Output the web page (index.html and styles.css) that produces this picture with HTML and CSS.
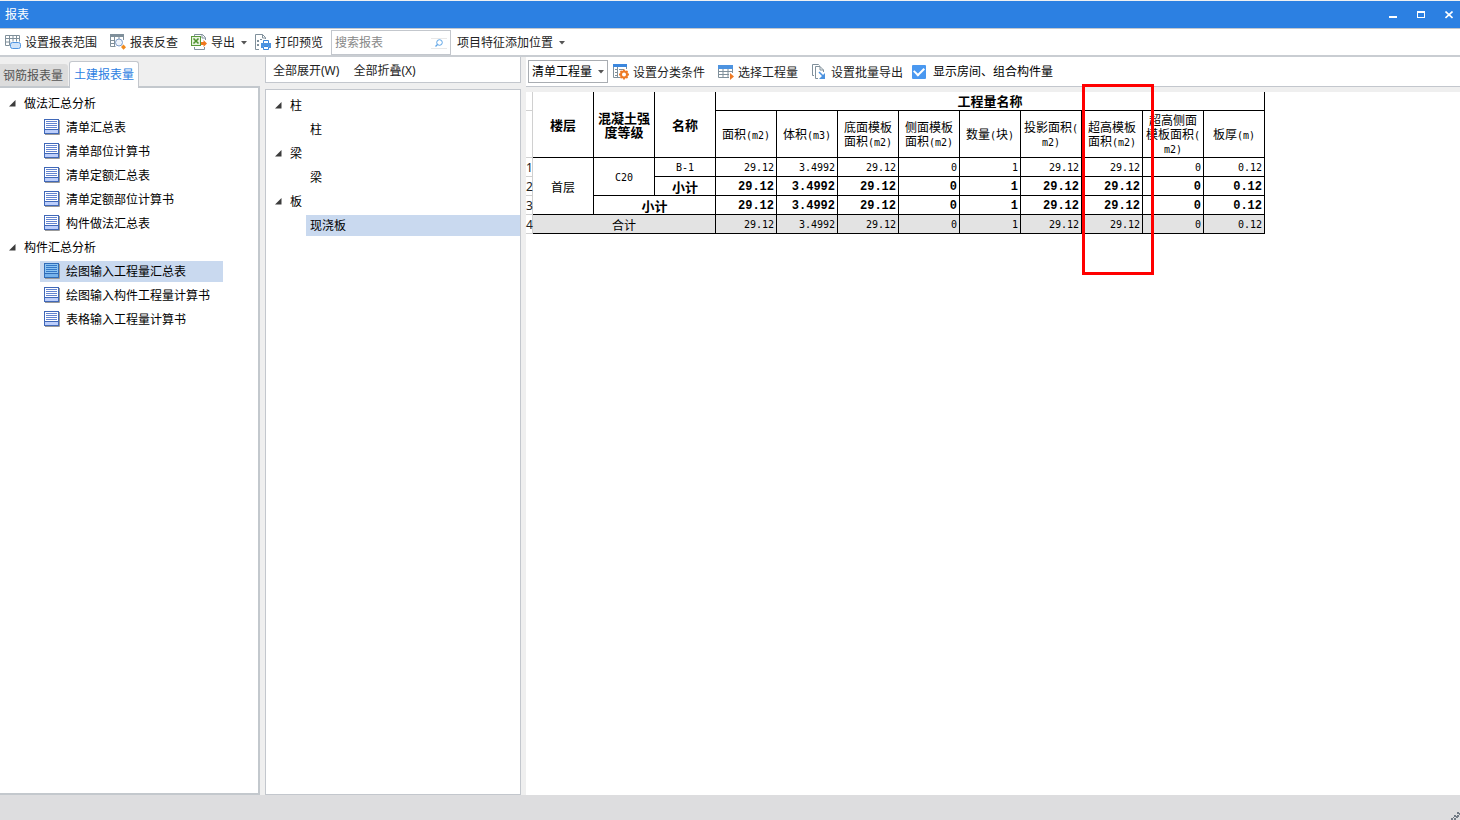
FILE: index.html
```html
<!DOCTYPE html>
<html lang="zh-CN">
<head>
<meta charset="utf-8">
<title>报表</title>
<link rel="stylesheet" href="styles.css">
</head>
<body>
<svg class="defs" aria-hidden="true">
  <symbol id="doc" viewBox="0 0 16 16">
    <path d="M1 15.500h14.500V1" fill="none" stroke="#9a9a9a"/>
    <rect class="doc-page" x=".5" y=".5" width="14" height="14"/>
    <path class="doc-foot" d="M1 11h13v3H1z"/>
    <path class="doc-line" d="M2 2.500h11M2 4.500h11M2 6.500h11M2 8.500h11" fill="none"/>
    <path class="doc-rule" d="M1 10.500h13" fill="none"/>
  </symbol>
  <symbol id="caret" viewBox="0 0 6 4"><path d="M0 0h6L3 3.500z" fill="#555"/></symbol>
  <symbol id="open" viewBox="0 0 7 7"><path d="M6.500 0v6.500H0z" fill="#3c3c3c"/></symbol>
</svg>

<header class="titlebar">
  <h1 class="title">报表</h1>
  <div class="window-controls">
    <button class="win-btn" aria-label="最小化"><svg width="8" height="8" viewBox="0 0 8 8"><path d="M0 5h8v2H0z" fill="#fff"/></svg></button>
    <button class="win-btn" aria-label="最大化"><svg width="8" height="8" viewBox="0 0 8 8"><path d="M0 0h8v7H0zM1 2v4h6V2z" fill="#fff" fill-rule="evenodd"/></svg></button>
    <button class="win-btn" aria-label="关闭"><svg width="8" height="8" viewBox="0 0 8 8"><path d="M.5.500l7 6.500M7.500.500l-7 6.500" stroke="#fff" stroke-width="1.600"/></svg></button>
  </div>
</header>

<div class="toolbar main-toolbar">
  <button class="tool">
    <svg class="icon" width="16" height="16" viewBox="0 0 16 16" fill="none"><path d="M.5 1.500h14v6M.5 1.500v10h4M.5 4.500h14M.5 8h5M4.500 1.500v10M8 1.500v6M11.500 1.500v6" stroke="#80909b"/><rect x="5.500" y="8.500" width="10" height="6" rx="2" fill="#cfe3fa" stroke="#4d93e0"/></svg>
    设置报表范围</button>
  <button class="tool">
    <svg class="icon" width="16" height="16" viewBox="0 0 16 16" fill="none"><path d="M0 0h14v3H0z" fill="#80909b"/><path d="M.5 3v9.500h5M13.500 3v3M0 6.500h5M0 9.500h5M4.500 3v9M9 3v2" stroke="#80909b"/><circle cx="9" cy="8.500" r="3.500" fill="#edf3fb" stroke="#7d9cc9"/><path d="M11 13l2.500-2.500 2.500 2.800-2.500 2.500z" fill="#f08a1d"/></svg>
    报表反查</button>
  <button class="tool tool-export">
    <svg class="icon" width="16" height="16" viewBox="0 0 16 16" fill="none"><path d="M3.500 2V.5h8l3 3V6M3.500 13v2.500h10V13" stroke="#80909b"/><path d="M11 .5v3.500h3" stroke="#80909b"/><rect x=".5" y="2.500" width="9" height="9" fill="#e7f3df" stroke="#5b9a3c"/><path d="M2.500 4.500l5 5M7.500 4.500l-5 5" stroke="#4f9430" stroke-width="1.600"/><path d="M10 8h2.500V6L16 9.500 12.500 13v-2H10z" fill="#f0781e"/></svg>
    导出<svg class="caret" width="6" height="4"><use href="#caret"/></svg></button>
  <button class="tool">
    <svg class="icon" width="16" height="16" viewBox="0 0 16 16" fill="none"><path d="M4 15.500H.5V.5h7l3 3V5M7.500.5V4h3" stroke="#80909b"/><path d="M2 6h2v2H2zM5 5h2v1H5zM2 10h2v2H2z" fill="#80909b"/><path d="M8.500 9V6.500h5V9" stroke="#3c87dd"/><path d="M6 9h10v5h-2v-2H8v2H6z" fill="#4d93e0"/><path d="M8.500 12.500h5v3h-5z" fill="#fff" stroke="#3c87dd"/></svg>
    打印预览</button>
  <div class="search">
    <input class="search-input" type="text" placeholder="搜索报表" aria-label="搜索报表">
    <button class="search-btn" aria-label="搜索"><svg width="8" height="8" viewBox="0 0 8 8" fill="none"><circle cx="4.500" cy="3.500" r="2.800" stroke="#5ba3e6"/><path d="M2.500 5.500L.5 7.500" stroke="#5ba3e6" stroke-width="1.300"/></svg></button>
  </div>
  <button class="tool">项目特征添加位置<svg class="caret" width="6" height="4"><use href="#caret"/></svg></button>
</div>

<main class="workspace">
  <section class="reports">
    <nav class="tabs">
      <button class="tab">钢筋报表量</button>
      <button class="tab tab-active">土建报表量</button>
    </nav>
    <div class="report-tree">
      <ul class="tree">
        <li class="node"><svg width="7" height="7"><use href="#open"/></svg>做法汇总分析</li>
        <li class="leaf"><svg width="16" height="16"><use href="#doc"/></svg>清单汇总表</li>
        <li class="leaf"><svg width="16" height="16"><use href="#doc"/></svg>清单部位计算书</li>
        <li class="leaf"><svg width="16" height="16"><use href="#doc"/></svg>清单定额汇总表</li>
        <li class="leaf"><svg width="16" height="16"><use href="#doc"/></svg>清单定额部位计算书</li>
        <li class="leaf"><svg width="16" height="16"><use href="#doc"/></svg>构件做法汇总表</li>
        <li class="node"><svg width="7" height="7"><use href="#open"/></svg>构件汇总分析</li>
        <li class="leaf selected"><svg width="16" height="16"><use href="#doc"/></svg>绘图输入工程量汇总表</li>
        <li class="leaf"><svg width="16" height="16"><use href="#doc"/></svg>绘图输入构件工程量计算书</li>
        <li class="leaf"><svg width="16" height="16"><use href="#doc"/></svg>表格输入工程量计算书</li>
      </ul>
    </div>
  </section>

  <section class="members">
    <div class="toolbar member-toolbar">
      <button class="tool">全部展开(W)</button>
      <button class="tool">全部折叠(X)</button>
    </div>
    <div class="member-tree">
      <ul class="tree">
        <li class="node"><svg width="7" height="7"><use href="#open"/></svg>柱</li>
        <li class="member">柱</li>
        <li class="node"><svg width="7" height="7"><use href="#open"/></svg>梁</li>
        <li class="member">梁</li>
        <li class="node"><svg width="7" height="7"><use href="#open"/></svg>板</li>
        <li class="member selected">现浇板</li>
      </ul>
    </div>
  </section>

  <section class="quantities">
    <div class="toolbar quantity-toolbar">
      <div class="combo">
        <select class="combo-select" aria-label="工程量类型"><option>清单工程量</option></select>
        <svg class="combo-caret" width="6" height="4"><use href="#caret"/></svg>
      </div>
      <button class="tool">
        <svg class="icon" width="16" height="16" viewBox="0 0 16 16" fill="none"><path d="M.5 2v11.500H7M13.500 2v3M4.500 3v10" stroke="#80909b"/><path d="M0 0h14v3H0z" fill="#3c87dd"/><path d="M2 5.500h2M2 8.500h2M2 11.500h2M6 5.500h5" stroke="#80909b"/><path d="M11 5.500v10M6 10.500h10M7.500 7l7 7M14.500 7l-7 7" stroke="#ee7a24" stroke-width="1.800"/><circle cx="11" cy="10.500" r="3" fill="#fff" stroke="#ee7a24" stroke-width="2"/></svg>
        设置分类条件</button>
      <button class="tool">
        <svg class="icon" width="16" height="16" viewBox="0 0 16 16" fill="none"><path d="M0 1h15v4H0z" fill="#4d93e0"/><path d="M.5 5v8.500H11M14.500 5v4M0 7.500h15M0 10.500h11M5 5v9M10 5v9" stroke="#80909b"/><path d="M12 9l4 3.500-4 3.500z" fill="#ee7a24"/></svg>
        选择工程量</button>
      <button class="tool">
        <svg class="icon" width="16" height="16" viewBox="0 0 16 16" fill="none"><path d="M3 11.500H1.500V.5h6l1 1" stroke="#80909b"/><path d="M7 14.500H4.500v-12H9l3.500 3.500V8M9 2.500V6h3.500" stroke="#80909b"/><path d="M8 8l4.500 4.500" stroke="#4d93e0" stroke-width="1.600"/><path d="M14 9v6H8z" fill="#4d93e0"/></svg>
        设置批量导出</button>
      <label class="check"><input class="check-box" type="checkbox" checked>显示房间、组合构件量</label>
    </div>

    <div class="sheet">
      <table class="grid">
        <colgroup><col class="col-no"><col><col><col><col><col><col><col><col><col><col><col><col></colgroup>
        <thead>
          <tr class="head-top"><th class="no"></th><th rowspan="2">楼层</th><th rowspan="2">混凝土强<br>度等级</th><th rowspan="2">名称</th><th colspan="9">工程量名称</th></tr>
          <tr class="head-sub"><th class="no"></th>
            <th>面积<span class="unit">(m2)</span></th><th>体积<span class="unit">(m3)</span></th><th>底面模板<br>面积<span class="unit">(m2)</span></th><th>侧面模板<br>面积<span class="unit">(m2)</span></th><th>数量<span class="unit">(</span>块<span class="unit">)</span></th><th>投影面积<span class="unit">(<br>m2)</span></th><th>超高模板<br>面积<span class="unit">(m2)</span></th><th>超高侧面<br>模板面积<span class="unit">(<br>m2)</span></th><th>板厚<span class="unit">(m)</span></th></tr>
        </thead>
        <tbody>
          <tr><th class="no">1</th><td class="text" rowspan="3">首层</td><td class="code" rowspan="2">C20</td><td class="code">B-1</td><td>29.12</td><td>3.4992</td><td>29.12</td><td>0</td><td>1</td><td>29.12</td><td>29.12</td><td>0</td><td>0.12</td></tr>
          <tr class="subtotal"><th class="no">2</th><td class="text">小计</td><td>29.12</td><td>3.4992</td><td>29.12</td><td>0</td><td>1</td><td>29.12</td><td>29.12</td><td>0</td><td>0.12</td></tr>
          <tr class="subtotal"><th class="no">3</th><td class="text" colspan="2">小计</td><td>29.12</td><td>3.4992</td><td>29.12</td><td>0</td><td>1</td><td>29.12</td><td>29.12</td><td>0</td><td>0.12</td></tr>
          <tr class="total"><th class="no">4</th><td class="text" colspan="3">合计</td><td>29.12</td><td>3.4992</td><td>29.12</td><td>0</td><td>1</td><td>29.12</td><td>29.12</td><td>0</td><td>0.12</td></tr>
        </tbody>
      </table>
      <div class="marker"></div>
    </div>
  </section>
</main>

<footer class="statusbar">
  <svg width="10" height="8" viewBox="0 0 10 8"><path d="M7 0h2v2H7zM4 3h2v2H4zM7 3h2v2H7zM1 6h2v2H1zM4 6h2v2H4zM6 4h2v2H6zM3 5h1v1H3zM9 1h1v2H9z" fill="#717a85"/></svg>
</footer>
</body>
</html>
```
FILE: styles.css
```css
* { box-sizing: border-box; }

body {
  margin: 0;
  min-height: 100vh;
  display: flex;
  flex-direction: column;
  background: #efefef;
  color: #000;
  font: 12px/18px "Noto Sans", "Noto Sans CJK SC", sans-serif;
}

button, input, select { font: inherit; color: inherit; }
button { margin: 0; padding: 0; border: 0; background: none; }
svg { display: block; flex: none; }
.defs { position: absolute; width: 0; height: 0; }

/* Title bar */
.titlebar {
  display: flex;
  align-items: center;
  justify-content: space-between;
  height: 29px;
  padding: 0 1px 0 5px;
  background: #2c80e2;
  border-top: 1px solid #eef0f2;
  border-bottom: 1px solid #c3c7cd;
  color: #fff;
}
.title { margin: 0; font-size: 12px; font-weight: 400; }
.window-controls { display: flex; gap: 8px; }
.win-btn { display: grid; place-items: center; width: 20px; height: 20px; }

/* Toolbars */
.toolbar { display: flex; align-items: center; background: #fff; }
.main-toolbar {
  height: 28px;
  border-bottom: 2px solid #c9cdd2;
}
.tool {
  display: flex;
  align-items: center;
  gap: 4px;
  height: 20px;
  padding: 2px 7px 0 5px;
  color: #222;
  white-space: nowrap;
}
.icon { margin-bottom: 2px; }
.main-toolbar .tool + .tool { padding-left: 6px; }
.caret { margin-left: 2px; }
.main-toolbar .tool-export { padding-right: 2px; }
.search {
  display: flex;
  align-items: center;
  width: 120px;
  height: 25px;
  margin: 0 1px;
  padding: 2px 3px 0;
  border: 1px solid #c3c7cd;
}
.search-input { flex: 1; min-width: 0; padding: 0; border: 0; outline: 0; background: none; }
.search-input::placeholder { color: #888; opacity: 1; }
.search-btn {
  display: grid;
  place-items: center;
  width: 16px;
  height: 11px;
  border-top: 1px solid #e8e8e8;
  border-bottom: 1px solid #e8e8e8;
}

/* Three panes */
.workspace {
  flex: 1;
  display: grid;
  grid-template-columns: 260px 256px minmax(0, 1fr);
  column-gap: 5px;
}
.reports, .members, .quantities { display: flex; flex-direction: column; }

.tabs { display: flex; align-items: flex-end; gap: 1px; height: 29px; }
.tab {
  height: 22px;
  padding: 2px 5px 0 3px;
  background: #dcdcdc;
  border-radius: 0 3px 0 0;
  color: #555;
}
.tab-active {
  position: relative;
  height: 27px;
  margin-bottom: -2px;
  padding: 0 4px;
  background: #fff;
  border: 1px solid #c3c7cd;
  border-bottom: 0;
  border-radius: 3px 3px 0 0;
  color: #2c80e2;
}
.report-tree {
  flex: 1;
  padding-top: 5px;
  background: #fff;
  border: 2px solid #c3c8cd;
  border-left: 0;
}
.tree {
  --page: #fff;
  --foot: #bccefb;
  --line: #6384d0;
  --edge: #4068b8;
  display: flex;
  flex-direction: column;
  align-items: flex-start;
  gap: 3px;
  margin: 0;
  padding: 0;
  list-style: none;
}
.node, .leaf, .member { display: flex; align-items: center; height: 21px; }
.node { gap: 8px; padding-left: 9px; }
.leaf { gap: 6px; margin-left: 40px; padding: 0 37px 0 4px; }
.leaf svg { margin-bottom: 1px; }
.member { align-self: stretch; margin-left: 40px; padding-left: 4px; }
.selected {
  --page: #8cc4f2;
  --foot: #74b2ec;
  --line: #3478c8;
  --edge: #2f6cb8;
  background: #c9d9ef;
}
.doc-page { fill: var(--page); stroke: var(--edge); }
.doc-foot { fill: var(--foot); }
.doc-line { stroke: var(--line); }
.doc-rule { stroke: var(--edge); }

.member-toolbar { height: 26px; border: 1px solid #c3c7cd; border-top: 0; }
.member-toolbar .tool { padding: 2px 7px 0; }
.member-tree {
  flex: 1;
  margin-top: 6px;
  padding-top: 5px;
  background: #fff;
  border: 1px solid #c3c7cd;
}

.quantities { background: #fff; }
.quantity-toolbar {
  height: 30px;
  padding-left: 2px;
  border-bottom: 1px solid #c3c7cd;
}
.quantity-toolbar .tool { padding-right: 8px; }
.combo { position: relative; width: 80px; height: 23px; }
.combo-select {
  appearance: none;
  width: 100%;
  height: 100%;
  padding: 0 3px;
  border: 1px solid #a9adb2;
  border-radius: 0;
  background: #fff;
}
.combo-caret { position: absolute; right: 4px; top: 10px; pointer-events: none; }
.check { display: flex; align-items: center; gap: 7px; margin-left: 1px; }
.check-box {
  appearance: none;
  display: grid;
  place-items: center;
  width: 14px;
  height: 14px;
  margin: 0;
  border-radius: 1px;
  background: #4a98f0;
}
.check-box:checked::before {
  content: "";
  width: 8px;
  height: 5px;
  margin-bottom: 2px;
  border: solid #fff;
  border-width: 0 0 2px 2px;
  transform: rotate(-45deg);
}

/* Quantity sheet */
.sheet {
  position: relative;
  flex: 1;
  border-top: 5px solid #efefef;
}
.grid {
  width: 739px;
  table-layout: fixed;
  border-collapse: separate;
  border-spacing: 0;
  line-height: 14px;
}
.col-no { width: 7px; }
.grid th, .grid td {
  height: 19px;
  padding: 2px 2px 0;
  border: solid #000;
  border-width: 0 1px 1px 0;
}
.grid td {
  text-align: right;
  font: 10px/14px "DejaVu Sans Mono", "Noto Sans CJK SC", monospace;
}
.grid .head-top th { padding: 0; font-size: 13px; }
.grid .head-sub th { height: 47px; padding: 2px 0 0; font-weight: 400; }
.grid .text { text-align: center; font-family: "Noto Sans CJK SC", sans-serif; font-size: 12px; }
.grid .code { text-align: center; }
.grid .subtotal .text { font-size: 13px; font-weight: 700; }
.subtotal td:not(.text) { font-family: "Liberation Mono", monospace; font-size: 12px; font-weight: 700; }
.total td { background: #e3e3e3; }
.unit { font: 10px/12px "DejaVu Sans Mono", monospace; }
.grid .no {
  padding: 2px 0 0;
  border-color: #d0d0d0;
  color: #222;
  font-weight: 400;
}
.marker {
  position: absolute;
  left: 556px;
  top: -8px;
  width: 72px;
  height: 191px;
  border: 3px solid #f00;
  pointer-events: none;
}

.statusbar {
  display: flex;
  align-items: flex-end;
  justify-content: flex-end;
  height: 25px;
  background: #dddddf;
}
```
